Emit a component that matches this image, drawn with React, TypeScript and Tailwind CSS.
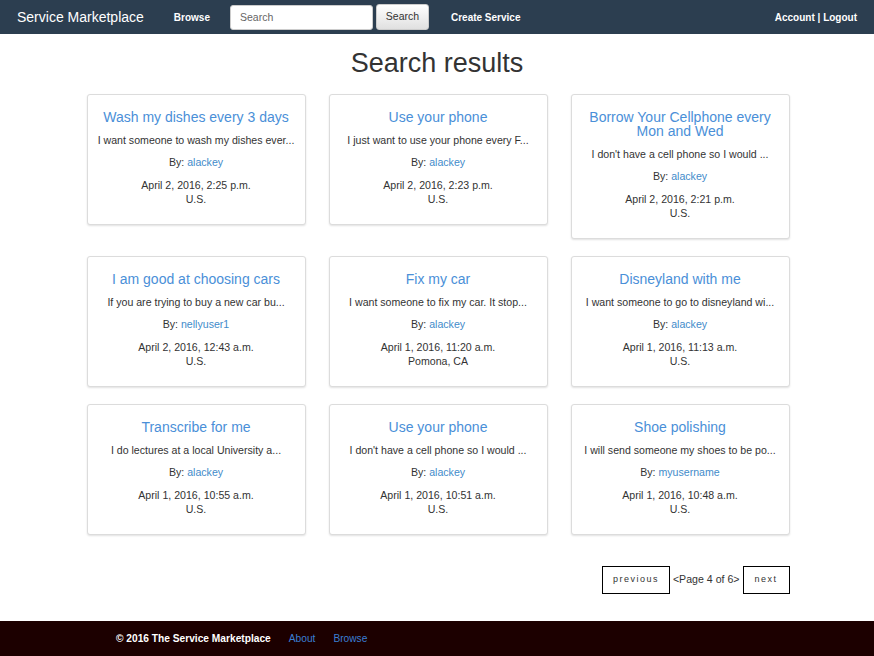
const services = [
  { title: 'Wash my dishes every 3 days', desc: 'I want someone to wash my dishes ever...', user: 'alackey', date: 'April 2, 2016, 2:25 p.m.', loc: 'U.S.' },
  { title: 'Use your phone', desc: 'I just want to use your phone every F...', user: 'alackey', date: 'April 2, 2016, 2:23 p.m.', loc: 'U.S.' },
  { title: 'Borrow Your Cellphone every Mon and Wed', desc: "I don't have a cell phone so I would ...", user: 'alackey', date: 'April 2, 2016, 2:21 p.m.', loc: 'U.S.' },
  { title: 'I am good at choosing cars', desc: 'If you are trying to buy a new car bu...', user: 'nellyuser1', date: 'April 2, 2016, 12:43 a.m.', loc: 'U.S.' },
  { title: 'Fix my car', desc: 'I want someone to fix my car. It stop...', user: 'alackey', date: 'April 1, 2016, 11:20 a.m.', loc: 'Pomona, CA' },
  { title: 'Disneyland with me', desc: 'I want someone to go to disneyland wi...', user: 'alackey', date: 'April 1, 2016, 11:13 a.m.', loc: 'U.S.' },
  { title: 'Transcribe for me', desc: 'I do lectures at a local University a...', user: 'alackey', date: 'April 1, 2016, 10:55 a.m.', loc: 'U.S.' },
  { title: 'Use your phone', desc: "I don't have a cell phone so I would ...", user: 'alackey', date: 'April 1, 2016, 10:51 a.m.', loc: 'U.S.' },
  { title: 'Shoe polishing', desc: 'I will send someone my shoes to be po...', user: 'myusername', date: 'April 1, 2016, 10:48 a.m.', loc: 'U.S.' },
];

const ServiceCard = ({ s }: { s: (typeof services)[number] }) => {
  return (
    <div className="border border-[#dcdcdc] rounded-[3px] bg-white shadow-[0_1px_2px_rgba(0,0,0,0.12)] pt-[15px] pb-[18px] px-[8px] text-center">
      <h3 className="text-[14px] leading-[14px] text-[#4a8fd8] px-[4px]">{s.title}</h3>
      <p className="mt-[9px] text-[10.6px] leading-[14px] text-[#333] whitespace-nowrap">{s.desc}</p>
      <p className="mt-[8px] text-[10.6px] leading-[14px] text-[#333]">
        By: <a href="#" className="text-[#428bca]">{s.user}</a>
      </p>
      <p className="mt-[9px] text-[10.6px] leading-[14px] text-[#333]">{s.date}</p>
      <p className="text-[10.6px] leading-[14px] text-[#333]">{s.loc}</p>
    </div>
  );
};

const App = () => {
  return (
    <div className="min-h-[656px] flex flex-col bg-white font-['Liberation_Sans',Arial,sans-serif]">
      <nav className="h-[34px] bg-[#2c3e50] flex items-center px-[17px] text-white">
        <a href="#" className="text-[14px] leading-none">Service Marketplace</a>
        <a href="#" className="ml-[30px] text-[10px] font-bold">Browse</a>
        <div className="ml-[20px] flex items-center gap-[3px]">
          <input
            placeholder="Search"
            className="w-[143px] h-[25px] bg-white rounded-[3px] border border-[#ccc] px-[9px] text-[10.5px] text-[#555] placeholder:text-[#666] outline-none"
          />
          <button className="h-[26px] w-[53px] rounded-[3px] border border-[#ccc] bg-gradient-to-b from-white to-[#e0e0e0] text-[10.5px] text-[#333] mt-[-1px]">
            Search
          </button>
        </div>
        <a href="#" className="ml-[22px] text-[10px] font-bold">Create Service</a>
        <div className="ml-auto text-[10px] font-bold">
          <a href="#">Account</a> | <a href="#">Logout</a>
        </div>
      </nav>

      <main className="flex-1">
        <h1 className="mt-[14px] text-center text-[27px] leading-[30px] text-[#333]">Search results</h1>
        <div className="mt-[16px] grid grid-cols-[219px_219px_219px] gap-x-[23px] gap-y-[17px] justify-center items-start pl-[2px]">
          {services.map((s, i) => (
            <ServiceCard key={i} s={s} />
          ))}
        </div>
        <div className="mt-[31px] w-[705px] mx-auto pl-[2px] flex justify-end items-center">
          <a href="#" className="w-[68px] h-[28px] border border-black flex items-center justify-center text-[9px] tracking-[1.5px] text-[#333]">
            previous
          </a>
          <span className="mx-[3px] text-[10.6px] text-[#333]">&lt;Page 4 of 6&gt;</span>
          <a href="#" className="w-[47px] h-[28px] border border-black flex items-center justify-center text-[9px] tracking-[1.5px] text-[#333]">
            next
          </a>
        </div>
      </main>

      <footer className="mt-[27px] h-[35px] bg-[#1c0000] flex items-center pl-[116px] text-[10.2px]">
        <p className="text-white font-bold">© 2016 The Service Marketplace</p>
        <a href="#" className="ml-[18px] text-[#3a7fd5]">About</a>
        <a href="#" className="ml-[18px] text-[#3a7fd5]">Browse</a>
      </footer>
    </div>
  );
};

export default App;
